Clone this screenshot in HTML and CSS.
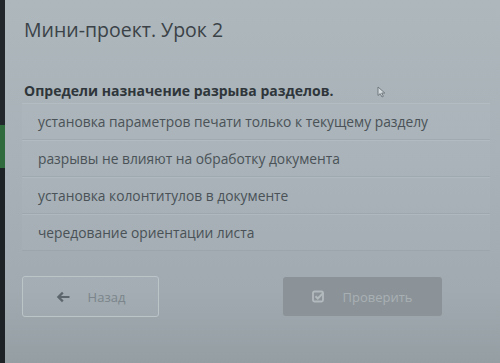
FILE: index.html
```html
<!DOCTYPE html>
<html lang="ru">
<head>
    <meta charset="UTF-8">
    <meta name="viewport" content="width=device-width, initial-scale=1.0">
    <title>Мини-проект. Урок 2</title>
    <link rel="stylesheet" href="styles.css">
</head>
<body>
    <div class="side-edge"></div>

    <div class="lesson">
        <h1 class="lesson-title">Мини-проект. Урок 2</h1>

        <div class="question">
            <p class="question-text">Определи назначение разрыва разделов.</p>

            <ul class="answers">
                <li class="answer">установка параметров печати только к текущему разделу</li>
                <li class="answer">разрывы не влияют на обработку документа</li>
                <li class="answer">установка колонтитулов в документе</li>
                <li class="answer">чередование ориентации листа</li>
            </ul>
        </div>

        <div class="actions">
            <button class="btn btn-back">
                <svg class="btn-icon" width="14" height="12" viewBox="0 0 14 12">
                    <path d="M6 0.8 L7.6 2.4 L5 5 H13.5 V7 H5 L7.6 9.6 L6 11.2 L0.8 6 Z" fill="#5c666c"/>
                </svg>
                Назад
            </button>
            <button class="btn btn-check" disabled>
                <svg class="btn-icon" width="13" height="13" viewBox="0 0 13 13">
                    <rect x="1" y="1.5" width="10" height="10" rx="1.5" fill="none" stroke="#b3babe" stroke-width="1.8"/>
                    <path d="M3.5 6.3 L5.8 8.5 L11.5 2.6" fill="none" stroke="#b3babe" stroke-width="2"/>
                </svg>
                Проверить
            </button>
        </div>

        <!-- mouse pointer left on the screen -->
        <svg class="cursor" width="9" height="12" viewBox="0 0 9 12">
            <path d="M1 1 L1 9.5 L3.2 7.6 L5 11 L6.4 10.3 L4.7 7 L7.8 7 Z" fill="#d6dcdf" stroke="#6a7378" stroke-width="0.9"/>
        </svg>
    </div>
</body>
</html>
```

FILE: styles.css
```css
* {
    margin: 0;
    padding: 0;
    box-sizing: border-box;
}

body {
    display: flex;
    min-height: 100vh;
    font-family: 'Open Sans', 'Noto Sans', sans-serif;
    background: linear-gradient(180deg, #adb7bc 0%, #a7b1b7 45%, #a0aab0 80%, #959ea3 100%);
    overflow: hidden;
}

.side-edge {
    width: 5px;
    flex-shrink: 0;
    background: linear-gradient(180deg, #22272b 0, #22272b 125px, #2f6b3c 125px, #2f6b3c 168px, #1d2226 168px);
}

.lesson {
    position: relative;
    flex: 1;
    padding: 17px 10px 0 17px;
}

.lesson-title {
    font-size: 19.5px;
    line-height: 26px;
    font-weight: 400;
    color: #3b4247;
    margin-bottom: 37px;
    margin-left: 2px;
}

.question-text {
    font-size: 14px;
    line-height: 22px;
    font-weight: 700;
    color: #2f363b;
    margin-left: 2px;
}

.answers {
    list-style: none;
    margin-top: 1px;
}

.answer {
    height: 37px;
    line-height: 36px;
    padding-left: 16px;
    font-size: 13.8px;
    color: #4a5257;
    background: rgba(255, 255, 255, 0.03);
    border-bottom: 1px solid rgba(80, 90, 96, 0.1);
    border-top: 1px solid rgba(255, 255, 255, 0.1);
}

.actions {
    display: flex;
    align-items: flex-start;
    gap: 124px;
    margin-top: 25px;
}

.btn {
    display: flex;
    align-items: center;
    justify-content: center;
    gap: 18px;
    font-family: inherit;
    font-size: 13px;
    border-radius: 3px;
}

.btn-back {
    width: 137px;
    height: 41px;
    background: rgba(255, 255, 255, 0.04);
    border: 1px solid #bcc4c8;
    color: #7b858b;
}

.btn-check {
    width: 159px;
    height: 39px;
    margin-top: 1px;
    background: #8b9398;
    border: none;
    color: #a9b0b4;
    gap: 17px;
}

.btn-icon {
    flex-shrink: 0;
}

.cursor {
    position: absolute;
    left: 372px;
    top: 86px;
}
```
